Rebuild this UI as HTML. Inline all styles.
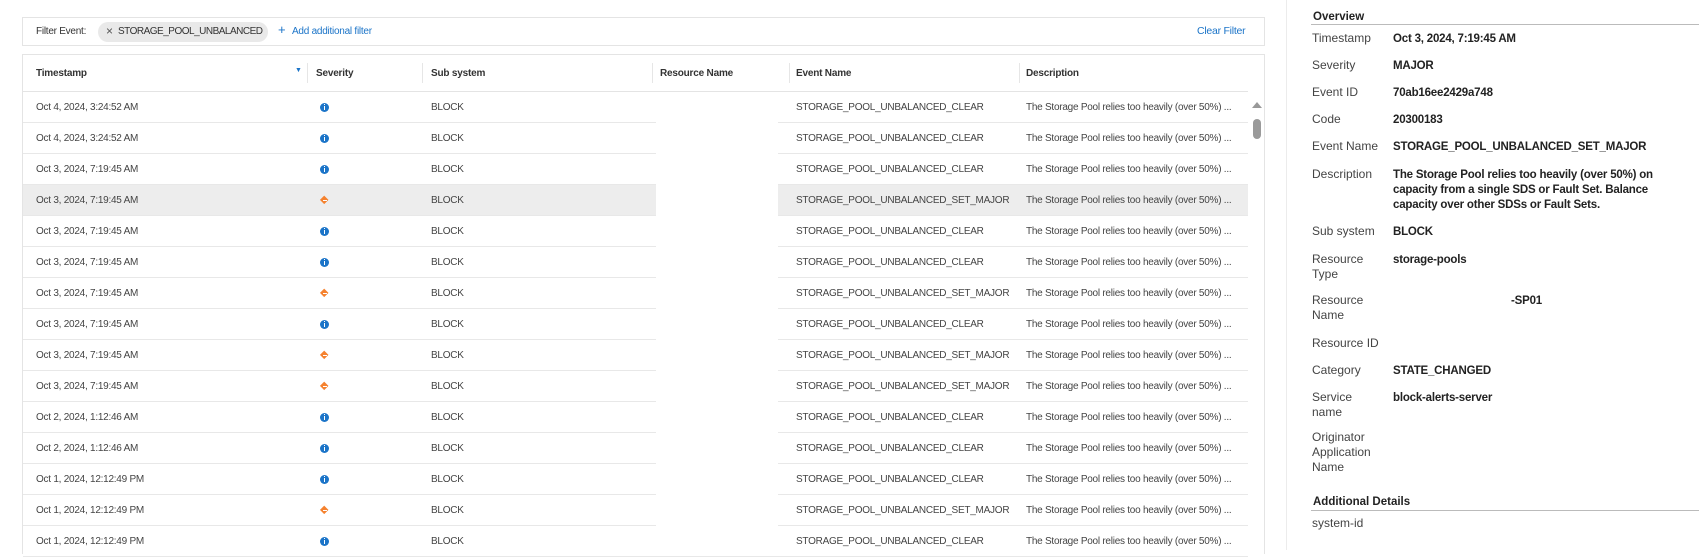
<!DOCTYPE html>
<html><head><meta charset="utf-8"><style>
*{margin:0;padding:0;box-sizing:border-box}
body{width:1702px;height:550px;background:#fff;position:relative;overflow:hidden;font-family:"Liberation Sans",sans-serif;color:#333}
.a{position:absolute;white-space:nowrap}
.t{font-size:10px;letter-spacing:-0.25px;color:#444}
.h{font-size:10px;font-weight:bold;letter-spacing:-0.2px;color:#333}
.row{position:absolute;left:23px;width:1225px;height:31px;border-bottom:1px solid #e8e8e8}
.row span{position:absolute;top:10px;font-size:10px;letter-spacing:-0.25px;color:#444;white-space:nowrap}
.info{position:absolute;top:11px;left:297px;width:9px;height:9px;border-radius:50%;background:#1b74c8}
.info:after{content:"";position:absolute;left:4px;top:3px;width:1.4px;height:4px;background:#fff}
.info:before{content:"";position:absolute;left:4px;top:1.3px;width:1.4px;height:1.2px;background:#fff}
.maj{position:absolute;top:11px;left:297px;width:9px;height:9px}
.maj:before{content:"";position:absolute;left:1.3px;top:1.3px;width:6.4px;height:6.4px;background:#f5822f;transform:rotate(45deg)}
.maj:after{content:"";position:absolute;left:2.5px;top:4px;width:4px;height:1.2px;background:#fff}
.l{position:absolute;left:1312px;font-size:12px;color:#444;line-height:15px}
.v{position:absolute;left:1393px;font-size:11.5px;font-weight:bold;color:#222;line-height:15px;letter-spacing:-0.2px;white-space:nowrap;margin-top:1px}
</style></head><body>
<div class="a" style="left:22px;top:17px;width:1243px;height:29px;border:1px solid #e4e4e4"></div>
<div class="a t" style="left:36px;top:26px;color:#333">Filter Event:</div>
<div class="a" style="left:98px;top:22px;width:170px;height:20px;border-radius:10px;background:#e9e9e9"></div>
<div class="a" style="left:106px;top:24px;font-size:12px;color:#555">×</div>
<div class="a t" style="left:118px;top:26px;color:#333;letter-spacing:-0.5px">STORAGE_POOL_UNBALANCED</div>
<div class="a" style="left:278px;top:22px;font-size:13px;color:#1b74c8">+</div>
<div class="a t" style="left:292px;top:26px;color:#1b74c8">Add additional filter</div>
<div class="a t" style="left:1197px;top:25px;color:#1b74c8;font-size:10.5px">Clear Filter</div>
<div class="a" style="left:22px;top:54px;width:1243px;height:500px;border:1px solid #e4e4e4;border-bottom:none"></div>
<div class="a" style="left:23px;top:91px;width:1225px;height:1px;background:#e4e4e4"></div>
<div class="a h" style="left:36px;top:68px">Timestamp</div>
<div class="a" style="left:295px;top:67px;font-size:7px;color:#1b74c8">▼</div>
<div class="a" style="left:307px;top:63px;width:1px;height:20px;background:#e6e6e6"></div>
<div class="a h" style="left:316px;top:68px">Severity</div>
<div class="a" style="left:422px;top:63px;width:1px;height:20px;background:#e6e6e6"></div>
<div class="a h" style="left:431px;top:68px">Sub system</div>
<div class="a" style="left:652px;top:63px;width:1px;height:20px;background:#e6e6e6"></div>
<div class="a h" style="left:660px;top:68px">Resource Name</div>
<div class="a" style="left:789px;top:63px;width:1px;height:20px;background:#e6e6e6"></div>
<div class="a h" style="left:796px;top:68px">Event Name</div>
<div class="a" style="left:1019px;top:63px;width:1px;height:20px;background:#e6e6e6"></div>
<div class="a h" style="left:1026px;top:68px">Description</div>

<div class="row" style="top:92px"><span style="left:13px">Oct 4, 2024, 3:24:52 AM</span><i class="info"></i><span style="left:408px">BLOCK</span><span style="left:773px">STORAGE_POOL_UNBALANCED_CLEAR</span><span style="left:1003px">The Storage Pool relies too heavily (over 50%) ...</span></div>
<div class="row" style="top:123px"><span style="left:13px">Oct 4, 2024, 3:24:52 AM</span><i class="info"></i><span style="left:408px">BLOCK</span><span style="left:773px">STORAGE_POOL_UNBALANCED_CLEAR</span><span style="left:1003px">The Storage Pool relies too heavily (over 50%) ...</span></div>
<div class="row" style="top:154px"><span style="left:13px">Oct 3, 2024, 7:19:45 AM</span><i class="info"></i><span style="left:408px">BLOCK</span><span style="left:773px">STORAGE_POOL_UNBALANCED_CLEAR</span><span style="left:1003px">The Storage Pool relies too heavily (over 50%) ...</span></div>
<div class="row" style="top:185px;background:#ededed"><span style="left:13px">Oct 3, 2024, 7:19:45 AM</span><i class="maj"></i><span style="left:408px">BLOCK</span><span style="left:773px">STORAGE_POOL_UNBALANCED_SET_MAJOR</span><span style="left:1003px">The Storage Pool relies too heavily (over 50%) ...</span></div>
<div class="row" style="top:216px"><span style="left:13px">Oct 3, 2024, 7:19:45 AM</span><i class="info"></i><span style="left:408px">BLOCK</span><span style="left:773px">STORAGE_POOL_UNBALANCED_CLEAR</span><span style="left:1003px">The Storage Pool relies too heavily (over 50%) ...</span></div>
<div class="row" style="top:247px"><span style="left:13px">Oct 3, 2024, 7:19:45 AM</span><i class="info"></i><span style="left:408px">BLOCK</span><span style="left:773px">STORAGE_POOL_UNBALANCED_CLEAR</span><span style="left:1003px">The Storage Pool relies too heavily (over 50%) ...</span></div>
<div class="row" style="top:278px"><span style="left:13px">Oct 3, 2024, 7:19:45 AM</span><i class="maj"></i><span style="left:408px">BLOCK</span><span style="left:773px">STORAGE_POOL_UNBALANCED_SET_MAJOR</span><span style="left:1003px">The Storage Pool relies too heavily (over 50%) ...</span></div>
<div class="row" style="top:309px"><span style="left:13px">Oct 3, 2024, 7:19:45 AM</span><i class="info"></i><span style="left:408px">BLOCK</span><span style="left:773px">STORAGE_POOL_UNBALANCED_CLEAR</span><span style="left:1003px">The Storage Pool relies too heavily (over 50%) ...</span></div>
<div class="row" style="top:340px"><span style="left:13px">Oct 3, 2024, 7:19:45 AM</span><i class="maj"></i><span style="left:408px">BLOCK</span><span style="left:773px">STORAGE_POOL_UNBALANCED_SET_MAJOR</span><span style="left:1003px">The Storage Pool relies too heavily (over 50%) ...</span></div>
<div class="row" style="top:371px"><span style="left:13px">Oct 3, 2024, 7:19:45 AM</span><i class="maj"></i><span style="left:408px">BLOCK</span><span style="left:773px">STORAGE_POOL_UNBALANCED_SET_MAJOR</span><span style="left:1003px">The Storage Pool relies too heavily (over 50%) ...</span></div>
<div class="row" style="top:402px"><span style="left:13px">Oct 2, 2024, 1:12:46 AM</span><i class="info"></i><span style="left:408px">BLOCK</span><span style="left:773px">STORAGE_POOL_UNBALANCED_CLEAR</span><span style="left:1003px">The Storage Pool relies too heavily (over 50%) ...</span></div>
<div class="row" style="top:433px"><span style="left:13px">Oct 2, 2024, 1:12:46 AM</span><i class="info"></i><span style="left:408px">BLOCK</span><span style="left:773px">STORAGE_POOL_UNBALANCED_CLEAR</span><span style="left:1003px">The Storage Pool relies too heavily (over 50%) ...</span></div>
<div class="row" style="top:464px"><span style="left:13px">Oct 1, 2024, 12:12:49 PM</span><i class="info"></i><span style="left:408px">BLOCK</span><span style="left:773px">STORAGE_POOL_UNBALANCED_CLEAR</span><span style="left:1003px">The Storage Pool relies too heavily (over 50%) ...</span></div>
<div class="row" style="top:495px"><span style="left:13px">Oct 1, 2024, 12:12:49 PM</span><i class="maj"></i><span style="left:408px">BLOCK</span><span style="left:773px">STORAGE_POOL_UNBALANCED_SET_MAJOR</span><span style="left:1003px">The Storage Pool relies too heavily (over 50%) ...</span></div>
<div class="row" style="top:526px"><span style="left:13px">Oct 1, 2024, 12:12:49 PM</span><i class="info"></i><span style="left:408px">BLOCK</span><span style="left:773px">STORAGE_POOL_UNBALANCED_CLEAR</span><span style="left:1003px">The Storage Pool relies too heavily (over 50%) ...</span></div>
<div class="a" style="left:656px;top:92px;width:122px;height:460px;background:#fff"></div>
<div class="a" style="left:1252px;top:102px;width:0;height:0;border-left:5px solid transparent;border-right:5px solid transparent;border-bottom:6px solid #999"></div>
<div class="a" style="left:1253px;top:119px;width:8px;height:20px;border-radius:4px;background:#9a9a9a"></div>
<div class="a" style="left:1286px;top:0;width:1px;height:550px;background:#ececec"></div>
<div class="a" style="left:1313px;top:11px;font-size:11.5px;font-weight:bold;color:#222">Overview</div>
<div class="a" style="left:1311px;top:24px;width:388px;height:1px;background:#bbb"></div>
<div class="l" style="top:31px">Timestamp</div><div class="v" style="top:31px">Oct 3, 2024, 7:19:45 AM</div>
<div class="l" style="top:58px">Severity</div><div class="v" style="top:58px">MAJOR</div>
<div class="l" style="top:85px">Event ID</div><div class="v" style="top:85px">70ab16ee2429a748</div>
<div class="l" style="top:112px">Code</div><div class="v" style="top:112px">20300183</div>
<div class="l" style="top:139px">Event Name</div><div class="v" style="top:139px">STORAGE_POOL_UNBALANCED_SET_MAJOR</div>
<div class="l" style="top:167px">Description</div><div class="v" style="top:167px">The Storage Pool relies too heavily (over 50%) on<br>capacity from a single SDS or Fault Set. Balance<br>capacity over other SDSs or Fault Sets.</div>
<div class="l" style="top:224px">Sub system</div><div class="v" style="top:224px">BLOCK</div>
<div class="l" style="top:252px">Resource<br>Type</div><div class="v" style="top:252px">storage-pools</div>
<div class="l" style="top:293px">Resource<br>Name</div><div class="v" style="top:293px;left:1511px">-SP01</div>
<div class="l" style="top:336px">Resource ID</div>
<div class="l" style="top:363px">Category</div><div class="v" style="top:363px">STATE_CHANGED</div>
<div class="l" style="top:390px">Service<br>name</div><div class="v" style="top:390px">block-alerts-server</div>
<div class="l" style="top:430px">Originator<br>Application<br>Name</div>
<div class="a" style="left:1313px;top:496px;font-size:11.5px;font-weight:bold;color:#222">Additional Details</div>
<div class="a" style="left:1311px;top:510px;width:388px;height:1px;background:#bbb"></div>
<div class="l" style="top:516px">system-id</div>
</body></html>
